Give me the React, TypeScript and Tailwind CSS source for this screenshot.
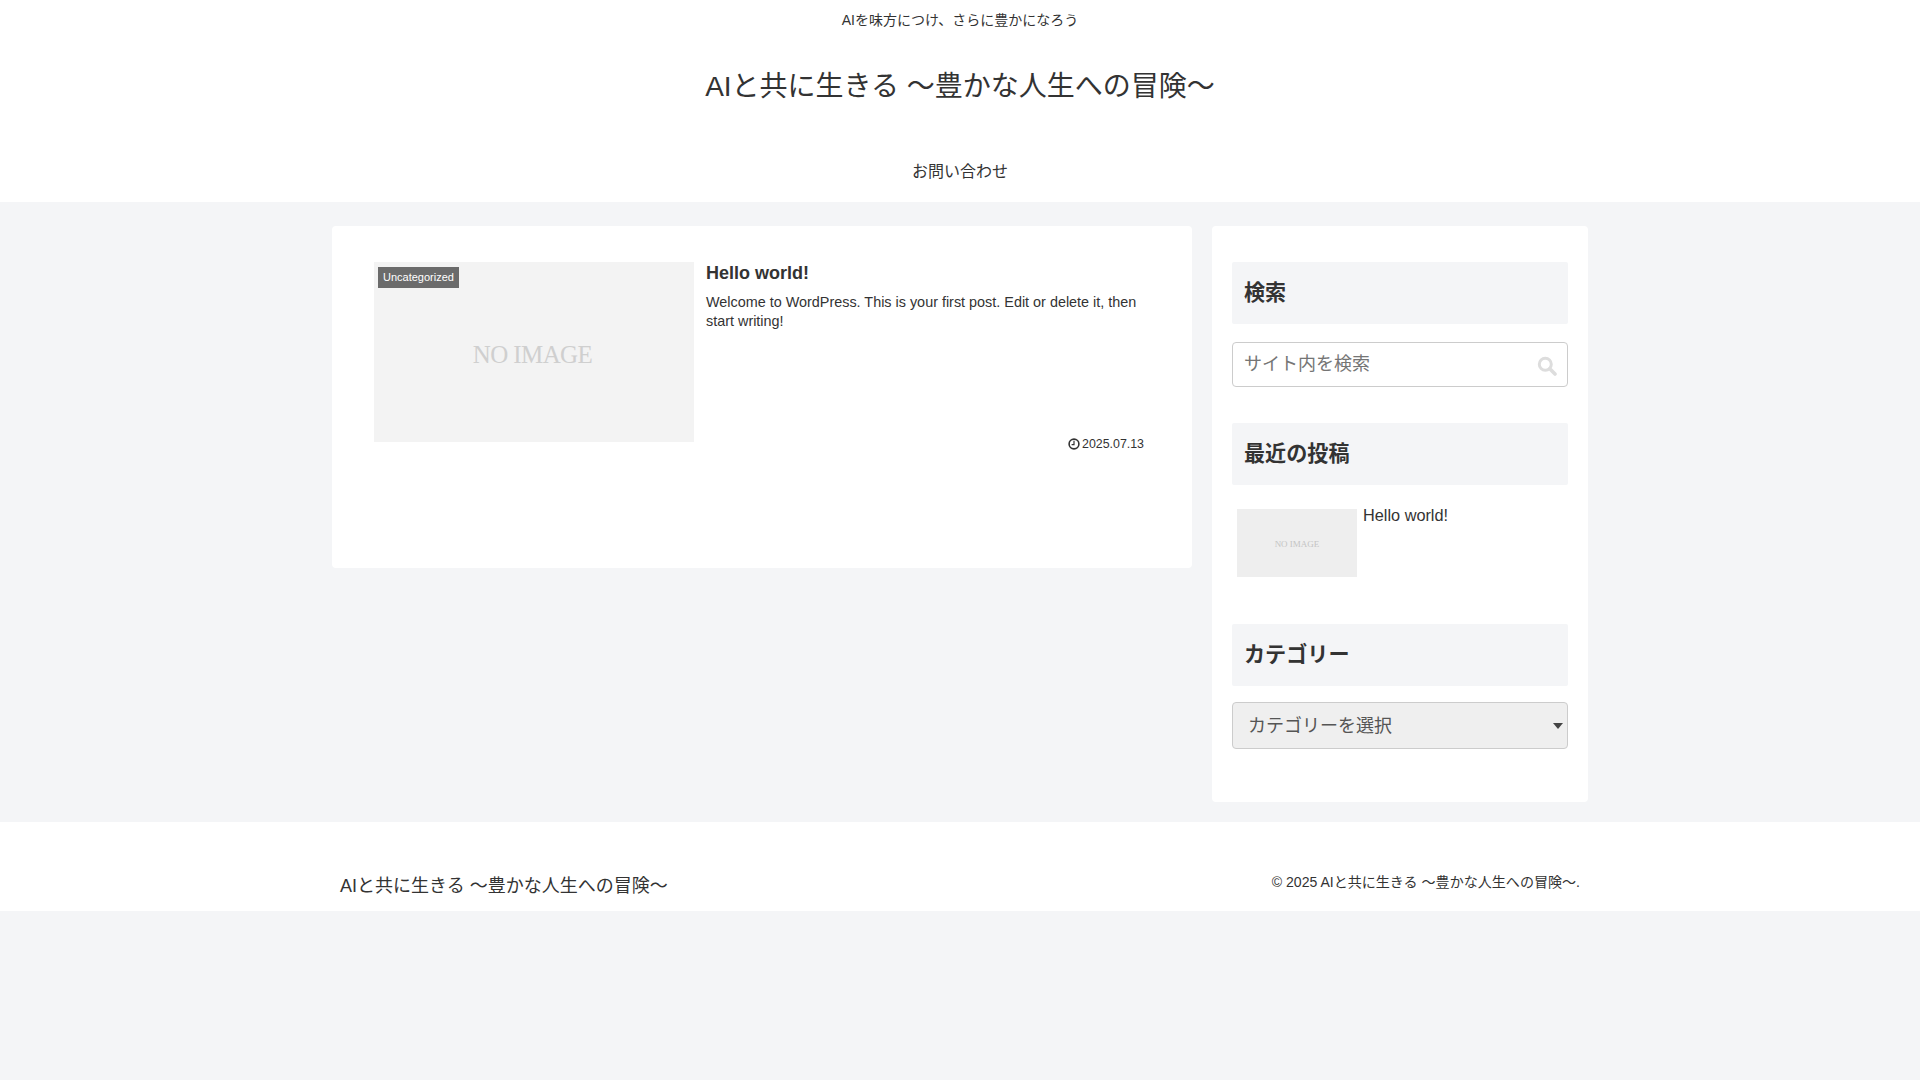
const siteName = "AIと共に生きる 〜豊かな人生への冒険〜"

function NoImage({ className, textClass }: { className: string; textClass: string }) {
  return (
    <div className={`flex items-center justify-center ${className}`}>
      <span className={`font-['Liberation_Serif',serif] whitespace-nowrap ${textClass}`}>NO IMAGE</span>
    </div>
  )
}

function WidgetTitle({ children }: { children: React.ReactNode }) {
  return (
    <h3 className="flex h-[62px] items-center rounded-[2px] bg-[#f4f5f7] px-3 pb-[1px] text-[21.1px] font-bold text-[#333]">
      {children}
    </h3>
  )
}

export default function App() {
  return (
    <div className="min-h-screen bg-[#f4f5f7] font-['Liberation_Sans','Noto_Sans_CJK_JP',sans-serif] text-[#333]">
      <header className="h-[202px] bg-white text-center">
        <p className="pt-[10px] text-[14px] leading-[20px]">AIを味方につけ、さらに豊かになろう</p>
        <h1 className="mt-[37px] text-[28px] leading-[40px] font-normal">{siteName}</h1>
        <nav className="mt-[53px] text-[16px] leading-[24px]">
          <a href="#">お問い合わせ</a>
        </nav>
      </header>

      <div className="mx-auto flex w-[1256px] justify-between pt-6">
        <main className="h-[342px] w-[860px] rounded-[4px] bg-white pt-9 pl-[42px]">
          <article className="flex">
            <div className="relative">
              <NoImage
                className="h-[180px] w-[320px] bg-[#f3f3f3] pt-[6px] pr-[3px]"
                textClass="text-[25px] tracking-[-0.6px] text-[#cfcfcf]"
              />
              <span className="absolute top-[5px] left-1 flex h-[21px] items-center bg-[#6b6b6b] px-[5px] text-[11px] text-white">
                Uncategorized
              </span>
            </div>
            <div className="ml-3 flex h-[191px] w-[438px] flex-col justify-between">
              <div>
                <h2 className="text-[18px] leading-[22px] font-bold">Hello world!</h2>
                <p className="mt-[9px] text-[14.4px] leading-[19px]">
                  Welcome to WordPress. This is your first post. Edit or delete it, then start writing!
                </p>
              </div>
              <div className="flex items-center justify-end gap-[2px] text-[12.4px] leading-[18px]">
                <svg viewBox="0 0 12 12" className="h-[12px] w-[12px]" fill="none" stroke="currentColor">
                  <circle cx="6" cy="6" r="4.9" strokeWidth="1.6" />
                  <path d="M6 2.8V6.6H3.6" strokeWidth="1.2" />
                </svg>
                <span>2025.07.13</span>
              </div>
            </div>
          </article>
        </main>

        <aside className="h-[576px] w-[376px] rounded-[4px] bg-white px-5 pt-9">
          <WidgetTitle>検索</WidgetTitle>
          <div className="relative mt-[18px]">
            <input
              placeholder="サイト内を検索"
              className="block h-[45px] w-full rounded-[4px] border border-[#ccc] bg-white pr-12 pb-[1px] pl-[11px] text-[18px] outline-none placeholder:text-[#757575]"
            />
            <svg viewBox="0 0 20 20" className="absolute top-[14px] right-[11px] h-[20px] w-[20px] text-[#ddd]" fill="none" stroke="currentColor">
              <circle cx="8.3" cy="8.3" r="6" strokeWidth="3" />
              <path d="M12.8 12.8L18 18" strokeWidth="3.6" strokeLinecap="round" />
            </svg>
          </div>

          <div className="mt-[36px]">
            <WidgetTitle>最近の投稿</WidgetTitle>
          </div>
          <div className="mt-6 flex pl-[5px]">
            <NoImage className="h-[68px] w-[120px] bg-[#eee] pt-[4px]" textClass="text-[9px] text-[#c4c4c4]" />
            <a href="#" className="ml-[6px] text-[16.3px] leading-[13px]">
              Hello world!
            </a>
          </div>

          <div className="mt-[47px]">
            <WidgetTitle>カテゴリー</WidgetTitle>
          </div>
          <div className="relative mt-4">
            <select className="block h-[47px] w-full appearance-none rounded-[4px] border border-[#ccc] bg-[#efefef] pt-[1px] pl-[15px] text-[18px] text-[#555]">
              <option>カテゴリーを選択</option>
            </select>
            <svg viewBox="0 0 10 6" className="absolute top-[21px] right-[5px] h-[6px] w-[10px] text-[#444]" fill="currentColor">
              <path d="M0 0H10L5 6Z" />
            </svg>
          </div>
        </aside>
      </div>

      <footer className="mt-5 h-[89px] bg-white">
        <div className="mx-auto flex w-[1256px] items-start justify-between pr-[8px] pl-2">
          <p className="pt-[50px] text-[18px] leading-[28px]">{siteName}</p>
          <p className="pt-[49px] text-[14.05px] leading-[22px]">© 2025 {siteName}.</p>
        </div>
      </footer>
    </div>
  )
}
